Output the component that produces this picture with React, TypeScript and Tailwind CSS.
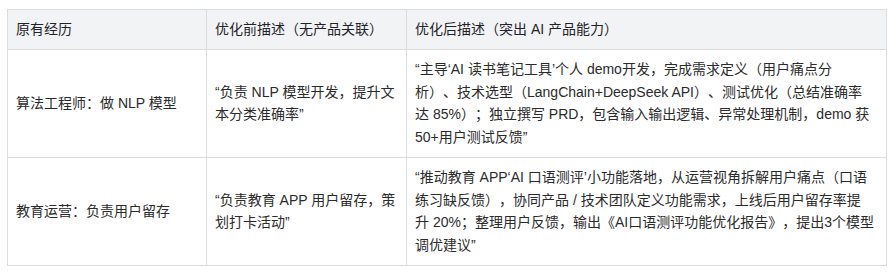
import React from 'react';

const rows = [
  {
    role: '算法工程师：做 NLP 模型',
    before: ['“负责 NLP 模型开发，提升文', '本分类准确率”'],
    after: [
      '“主导‘AI 读书笔记工具’个人 demo开发，完成需求定义（用户痛点分',
      '析）、技术选型（LangChain+DeepSeek API）、测试优化（总结准确率',
      '达 85%）；独立撰写 PRD，包含输入输出逻辑、异常处理机制，demo 获',
      '50+用户测试反馈”',
    ],
  },
  {
    role: '教育运营：负责用户留存',
    before: ['“负责教育 APP 用户留存，策', '划打卡活动”'],
    after: [
      '“推动教育 APP‘AI 口语测评’小功能落地，从运营视角拆解用户痛点（口语',
      '练习缺反馈），协同产品 / 技术团队定义功能需求，上线后用户留存率提',
      '升 20%；整理用户反馈，输出《AI口语测评功能优化报告》，提出3个模型',
      '调优建议”',
    ],
  },
];

function Lines({ lines }: { lines: string[] }) {
  return (
    <>
      {lines.map((l, i) => (
        <span key={i} className="block whitespace-nowrap">
          {l}
        </span>
      ))}
    </>
  );
}

export default function App() {
  return (
    <div className="min-h-screen bg-white pl-[7px] pt-[9px] font-['Liberation_Sans','Noto_Sans_CJK_SC',sans-serif] text-[14px] leading-[22.75px] text-[#2b2b2b] [text-spacing-trim:space-all]">
      <table className="w-[879px] table-fixed border-collapse">
        <colgroup>
          <col className="w-[199px]" />
          <col className="w-[200px]" />
          <col className="w-[480px]" />
        </colgroup>
        <thead>
          <tr className="bg-[#f2f3f5] text-left text-[#1f2329]">
            <th className="border border-[#dcdcdc] px-2 py-2 font-normal">原有经历</th>
            <th className="border border-[#dcdcdc] px-2 py-2 font-normal">优化前描述（无产品关联）</th>
            <th className="border border-[#dcdcdc] px-2 py-2 font-normal">优化后描述（突出 AI 产品能力）</th>
          </tr>
        </thead>
        <tbody>
          {rows.map((r) => (
            <tr key={r.role}>
              <td className="border border-[#dcdcdc] px-2 py-2 align-middle">{r.role}</td>
              <td className="border border-[#dcdcdc] px-2 py-2 align-middle">
                <Lines lines={r.before} />
              </td>
              <td className="overflow-hidden border border-[#dcdcdc] px-2 py-2 align-middle">
                <Lines lines={r.after} />
              </td>
            </tr>
          ))}
        </tbody>
      </table>
    </div>
  );
}
